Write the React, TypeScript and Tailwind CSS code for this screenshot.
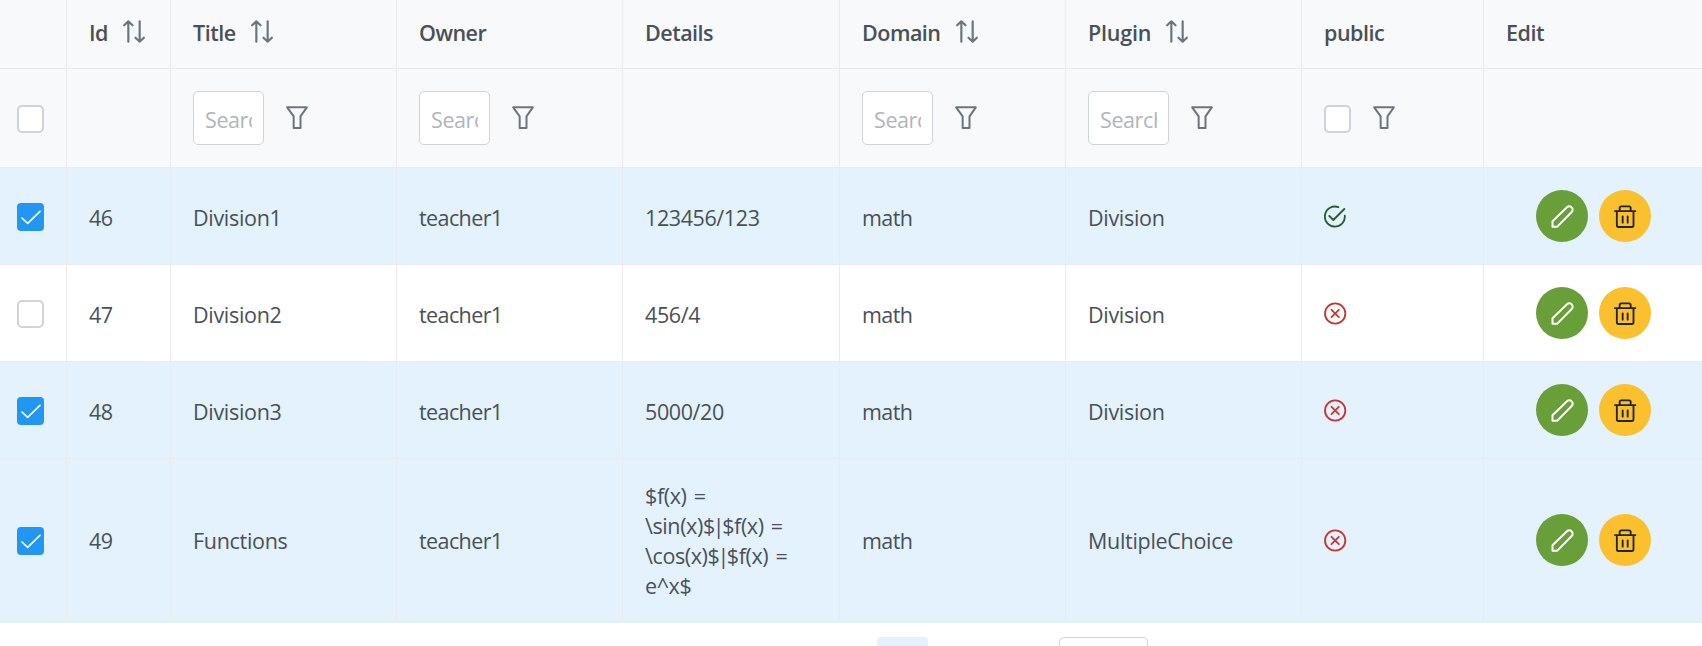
import type { ReactNode } from "react";

const COLS = "grid grid-cols-[67px_104px_226px_226px_217px_226px_236px_182px_minmax(0,1fr)]";

function Cell({ children, className = "" }: { children?: ReactNode; className?: string }) {
  return (
    <div className={`flex items-center border-r border-b border-[#e9ecef] pl-[22px] last:border-r-0 ${className}`}>
      {children}
    </div>
  );
}

function SortIcon() {
  return (
    <svg className="h-[23px] w-[22px] shrink-0" viewBox="0 0 66 69" fill="none" stroke="#6c757d" strokeWidth="6.500" strokeLinecap="round" strokeLinejoin="round">
      <path d="M16 4V65M3.5 16L16 4L28.5 16M50 4V65M37.500 53L50 65L62.500 53" />
    </svg>
  );
}

function FilterIcon() {
  return (
    <svg className="h-[23px] w-[22px] shrink-0" viewBox="0 0 66 69" fill="none" stroke="#6c757d" strokeWidth="6" strokeLinejoin="round">
      <path d="M3.500 4H62.500L43.500 31V66H23V31Z" />
    </svg>
  );
}

function PencilIcon() {
  return (
    <svg className="h-[23px] w-[23px]" viewBox="0 0 69 69" fill="none" stroke="#ffffff" strokeWidth="6" strokeLinejoin="round">
      <path d="M4.500 65V49L48 7C52 3 58 3 62 7C66 11 66 17 62 21L19 65Z" />
    </svg>
  );
}

function TrashIcon() {
  return (
    <svg className="h-[23px] w-[23px]" viewBox="0 0 69 69" fill="none" stroke="#212529" strokeWidth="5.500" strokeLinecap="round" strokeLinejoin="round">
      <path d="M3 18.500H64M8.500 18.500V61Q8.500 66 13.500 66H53.500Q58.500 66 58.500 61V18.500M17 18V9Q17 4 22 4H45Q50 4 50 9V18M26 34V53M41 34V53" />
    </svg>
  );
}

function StatusIcon({ ok }: { ok: boolean }) {
  return ok ? (
    <svg className="h-[23px] w-[23px]" viewBox="0 0 69 69" fill="none" stroke="#256029" strokeWidth="5.500" strokeLinecap="round" strokeLinejoin="round">
      <path d="M43 6.500A30 30 0 1 0 62.500 32M16 33L28 45L61 12" />
    </svg>
  ) : (
    <svg className="h-[23px] w-[23px]" viewBox="0 0 69 69" fill="none" stroke="#c63737" strokeWidth="5.500" strokeLinecap="round">
      <circle cx="33.500" cy="34.500" r="30.500" />
      <path d="M22.500 23.500L44.500 45.500M44.500 23.500L22.500 45.500" />
    </svg>
  );
}

function Checkbox({ checked = false }: { checked?: boolean }) {
  return checked ? (
    <div className="mt-0.5 flex h-7 w-[27px] items-center justify-center rounded-[4px] bg-[#2196f3]">
      <svg className="h-[15px] w-[20px]" viewBox="0 0 60 45" fill="none" stroke="#ffffff" strokeWidth="5" strokeLinecap="round" strokeLinejoin="round">
        <path d="M3 24L20 40L57 4" />
      </svg>
    </div>
  ) : (
    <div className="mt-0.5 h-7 w-[27px] rounded-[5px] border-2 border-[#ced4da] bg-white" />
  );
}

function Search({ wide = false }: { wide?: boolean }) {
  return (
    <>
      <div className={`h-[54px] shrink-0 rounded-[5px] border border-[#ced4da] bg-white px-[11px] ${wide ? "w-[81px]" : "w-[71px]"}`}>
        <div className="overflow-hidden pt-[3px] text-[21.5px] leading-[50px] tracking-[-0.4px] text-[#b0b5ba]">Search</div>
      </div>
      <div className="-mt-px ml-[22px] flex"><FilterIcon /></div>
    </>
  );
}

function DetailLine({ text }: { text: string }) {
  const [head, tail] = text.split("|");
  return (
    <div className="tracking-[-0.4px] [word-spacing:2px]">
      {head}
      {tail && <span className="-mx-[2px]">|</span>}
      {tail}
    </div>
  );
}

const rows = [
  { id: "46", title: "Division1", details: ["123456/123"], plugin: "Division", ok: true, checked: true, height: "h-[97px]", shift: "pt-[3px]" },
  { id: "47", title: "Division2", details: ["456/4"], plugin: "Division", ok: false, checked: false, height: "h-[97px]", shift: "pt-[3px]" },
  { id: "48", title: "Division3", details: ["5000/20"], plugin: "Division", ok: false, checked: true, height: "h-[97px]", shift: "pt-[3px]" },
  { id: "49", title: "Functions", details: ["$f(x) =", "\\sin(x)$|$f(x) =", "\\cos(x)$|$f(x) =", "e^x$"], plugin: "MultipleChoice", ok: false, checked: true, height: "h-[163px]", shift: "pt-[2px]" },
];

const headers = [
  { label: "Id", sort: true },
  { label: "Title", sort: true },
  { label: "Owner", sort: false },
  { label: "Details", sort: false },
  { label: "Domain", sort: true },
  { label: "Plugin", sort: true },
  { label: "public", sort: false },
  { label: "Edit", sort: false },
];

export default function App() {
  return (
    <div className="h-[646px] w-[1702px] overflow-hidden bg-white font-['Open_Sans',sans-serif] text-[21.5px] leading-[30px] tracking-[-0.6px] text-[#495057]">
      <div className={`${COLS} h-[69px] bg-[#f8f9fa] font-semibold tracking-[-0.5px]`}>
        <Cell />
        {headers.map((h) => (
          <Cell key={h.label}>
            <span className={h.label === "Plugin" ? "mt-[-2px] tracking-[-0.2px]" : "mt-[-2px]"}>{h.label}</span>
            {h.sort && <div className="ml-[15px] mt-[-6px] flex"><SortIcon /></div>}
          </Cell>
        ))}
      </div>
      <div className={`${COLS} h-[99px] bg-[#f8f9fa]`}>
        <Cell className="pl-[17px]!"><Checkbox /></Cell>
        <Cell />
        <Cell><Search /></Cell>
        <Cell><Search /></Cell>
        <Cell />
        <Cell><Search /></Cell>
        <Cell><Search wide /></Cell>
        <Cell>
          <Checkbox />
          <div className="-mt-px ml-[22px] flex"><FilterIcon /></div>
        </Cell>
        <Cell />
      </div>
      {rows.map((r) => (
        <div key={r.id} className={`${COLS} ${r.height} ${r.checked ? "bg-[#e3f2fd]" : "bg-white"}`}>
          <Cell className="pl-[17px]!"><Checkbox checked={r.checked} /></Cell>
          <Cell className={r.shift}><span>{r.id}</span></Cell>
          <Cell className={`tracking-[-0.3px] ${r.shift}`}><span>{r.title}</span></Cell>
          <Cell className={r.shift}><span>teacher1</span></Cell>
          <Cell className={r.shift}>
            <div>{r.details.map((line) => <DetailLine key={line} text={line} />)}</div>
          </Cell>
          <Cell className={r.shift}><span>math</span></Cell>
          <Cell className={`tracking-[-0.3px] ${r.shift}`}><span>{r.plugin}</span></Cell>
          <Cell><StatusIcon ok={r.ok} /></Cell>
          <Cell className="gap-[11px] pl-[52px]!">
            <div className="flex size-[52px] items-center justify-center rounded-full bg-[#689f38]"><PencilIcon /></div>
            <div className="flex size-[52px] items-center justify-center rounded-full bg-[#fbc02d]"><TrashIcon /></div>
          </Cell>
        </div>
      ))}
      <div className="h-px bg-[#e3f0fa]" />
      <div className="flex pt-[14px] pl-[877px]">
        <div className="h-[51px] w-[51px] rounded-[4px] bg-[#e3f2fd]" />
        <div className="ml-[131px] h-[51px] w-[89px] rounded-[5px] border border-[#ced4da] bg-white" />
      </div>
    </div>
  );
}
